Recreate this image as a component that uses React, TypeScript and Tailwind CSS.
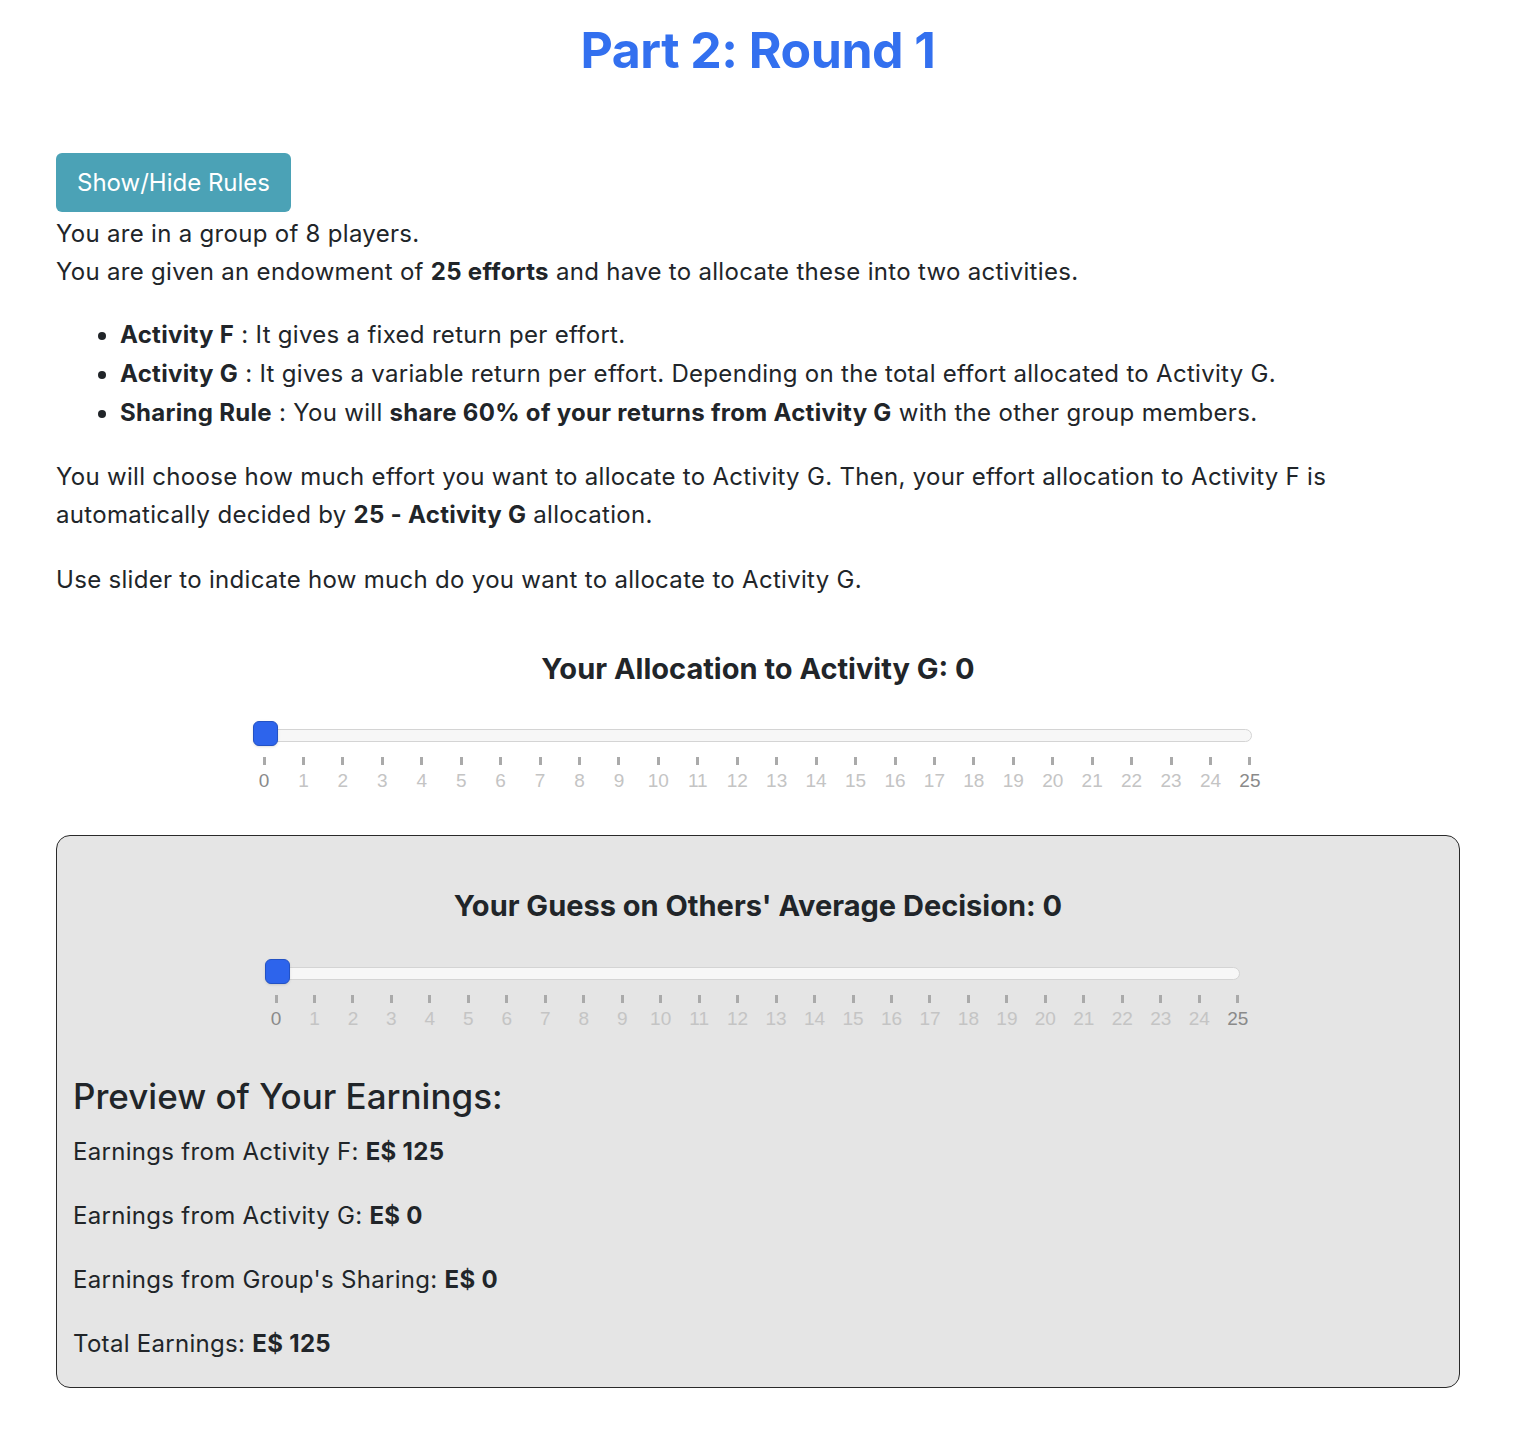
import React, { useState } from "react";

const Slider = ({ value, left, width }: { value: number; left: string; width: string }) => {
  const ticks = Array.from({ length: 26 }, (_, i) => i);
  return (
    <div className={`${left} ${width}`}>
      <div className="relative h-[25px] flex items-center">
        <div className="w-full h-[13px] mt-[4px] rounded-full bg-[#f7f7f7] border border-[#d4d4d4]" />
        <div
          className="absolute top-0 w-[25px] h-[25px] rounded-[6px] bg-[#2d64ec] border border-[#2352c4] shadow-sm"
          style={{ left: `${(value / 25) * 100}%` }}
        />
      </div>
      <div className="flex justify-between -ml-[1px] -mr-[10px] mt-[11px]">
        {ticks.map((t) => (
          <div key={t} className="w-[24px] flex flex-col items-center">
            <div className="w-[3px] h-[8px] bg-[#aaaaaa]" />
            <div
              className={`mt-[4px] text-[19px] leading-[24px] font-['Liberation_Sans',sans-serif] ${
                t === 0 || t === 25 ? "text-[#8a8a8a]" : "text-[#c4c4c4]"
              }`}
            >
              {t}
            </div>
          </div>
        ))}
      </div>
    </div>
  );
};

const App = () => {
  const [alloc] = useState(0);
  const [guess] = useState(0);

  return (
    <div className="min-h-[1430px] bg-white font-['Inter',sans-serif] text-[#212529]">
      <div className="ml-[56px] w-[1404px] pt-[17px] pb-[40px]">
        <h1 className="text-center text-[50px] leading-[66px] font-bold text-[#3370ef] tracking-[-0.5px]">
          Part 2: Round 1
        </h1>

        <button className="mt-[70px] h-[59px] w-[235px] rounded-[6px] bg-[#4ba2b6] text-white text-[24px]">
          Show/Hide Rules
        </button>

        <div className="mt-[3px] text-[24px] leading-[38px] tracking-[0.3px]">
          <div>You are in a group of 8 players.</div>
          <div>
            You are given an endowment of <b>25 efforts</b> and have to allocate these into two
            activities.
          </div>

          <ul className="list-disc pl-[64px] mt-[24px] mb-[26px] leading-[39px]">
            <li>
              <b>Activity F</b> : It gives a fixed return per effort.
            </li>
            <li>
              <b>Activity G</b> : It gives a variable return per effort. Depending on the total
              effort allocated to Activity G.
            </li>
            <li>
              <b>Sharing Rule</b> : You will <b>share 60% of your returns from Activity G</b> with
              the other group members.
            </li>
          </ul>

          <p className="w-[1300px]">
            You will choose how much effort you want to allocate to Activity G. Then, your effort
            allocation to Activity F is automatically decided by <b>25 - Activity G</b> allocation.
          </p>

          <p className="mt-[27px]">Use slider to indicate how much do you want to allocate to Activity G.</p>
        </div>

        <h2 className="mt-[50px] text-center text-[29px] leading-[40px] font-bold">
          Your Allocation to Activity G: {alloc}
        </h2>

        <div className="mt-[32px]">
          <Slider value={alloc} left="ml-[197px]" width="w-[999px]" />
        </div>

        <div className="mt-[42px] rounded-[14px] border border-[#2a2a2a] bg-[#e5e5e5] px-[16px] pt-[50px] pb-[28px]">
          <h2 className="text-center text-[29px] leading-[40px] font-bold">
            Your Guess on Others' Average Decision: {guess}
          </h2>

          <div className="mt-[33px]">
            <Slider value={guess} left="ml-[192px]" width="w-[975px]" />
          </div>

          <h3 className="mt-[41px] text-[35px] leading-[48px] font-medium">Preview of Your Earnings:</h3>
          <div className="text-[24px] leading-[30px] tracking-[0.3px] flex flex-col gap-[34px] mt-[17px]">
            <div>
              Earnings from Activity F: <b>E$ 125</b>
            </div>
            <div>
              Earnings from Activity G: <b>E$ 0</b>
            </div>
            <div>
              Earnings from Group's Sharing: <b>E$ 0</b>
            </div>
            <div>
              Total Earnings: <b>E$ 125</b>
            </div>
          </div>
        </div>
      </div>
    </div>
  );
};

export default App;
